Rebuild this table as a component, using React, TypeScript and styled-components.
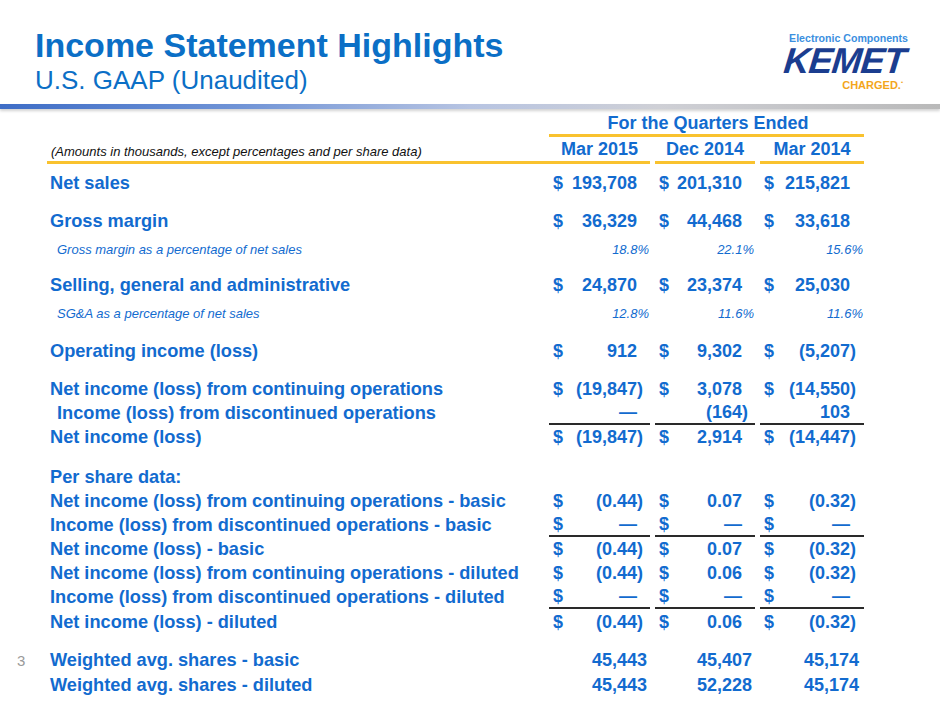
import styled, { createGlobalStyle } from 'styled-components';

const GlobalStyle = createGlobalStyle`
  html, body {
    margin: 0;
    padding: 0;
    background: #fff;
  }
  body {
    font-family: 'Liberation Sans', Arial, sans-serif;
  }
`;

const colors = {
  Title: '#0b6fc6',
  Blue: '#126bcf',
  Yellow: '#f9c22e',
  Rule: '#2a2a2a',
  Grey: '#9a9a9a',
};

const Page = styled.div`
  width: 940px;
  height: 705px;
  overflow: hidden;
  background: #fff;
`;

const Header = styled.header`
  height: 104px;
  display: flex;
  justify-content: space-between;
  align-items: flex-start;
  padding: 0 32px 0 35px;
  box-sizing: border-box;
`;

const TitleBlock = styled.div`
  padding-top: 25px;
  color: ${colors.Title};
`;

const Title = styled.h1`
  margin: 0;
  font-size: 34px;
  line-height: 40px;
  font-weight: 700;
`;

const Subtitle = styled.div`
  font-size: 26px;
  line-height: 30px;
`;

const Logo = styled.div`
  padding-top: 32px;
  display: flex;
  flex-direction: column;
  align-items: flex-end;
  font-weight: 700;
`;

const LogoTag = styled.div`
  font-size: 10.6px;
  line-height: 12px;
  color: #3b8fe0;
`;

const LogoMark = styled.div`
  margin-top: 2px;
  margin-right: 3px;
  font-size: 36px;
  line-height: 30px;
  font-style: italic;
  letter-spacing: -1px;
  color: #1b3d8f;
  transform: skewX(-6deg);
`;

const LogoCharged = styled.div`
  margin-right: 5px;
  font-size: 11px;
  line-height: 12px;
  color: #f3a61c;

  sup {
    font-size: 6px;
  }
`;

const Bar = styled.div`
  height: 5px;
  background: linear-gradient(
    to right,
    #3e6dc6 0%,
    #6f93d6 25%,
    #b7c4e2 50%,
    #cfd0d6 70%,
    #b9b9b9 100%
  );
  box-shadow: 0 2px 3px rgba(0, 0, 0, 0.18);
`;

const Table = styled.div`
  padding-top: 3px;
  color: ${colors.Blue};
`;

const Row = styled.div<{ $gap?: number; $height?: number }>`
  display: grid;
  grid-template-columns: 47px 502px 101px 105px 109px;
  height: ${(p) => p.$height ?? 24}px;
  margin-top: ${(p) => p.$gap ?? 0}px;
`;

const Gutter = styled.div`
  padding-left: 17px;
  font-size: 15px;
  color: ${colors.Grey};
  display: flex;
  align-items: center;
`;

const GroupTitle = styled.div`
  grid-column: 3 / 6;
  border-bottom: 3px solid ${colors.Yellow};
  display: flex;
  justify-content: center;
  align-items: flex-end;
  font-size: 18px;
  font-weight: 700;
  line-height: 21px;
  padding-left: 3px;
`;

const Note = styled.div`
  border-bottom: 3px solid ${colors.Yellow};
  display: flex;
  align-items: flex-end;
  padding: 0 0 2px 4px;
  font-size: 13px;
  font-style: italic;
  color: #111;
`;

const Label = styled.div<{ $indent?: number; $small?: boolean }>`
  display: flex;
  align-items: center;
  padding-left: ${(p) => 3 + (p.$indent ?? 0)}px;
  font-size: ${(p) => (p.$small ? 13 : 18.2)}px;
  font-weight: ${(p) => (p.$small ? 400 : 700)};
  font-style: ${(p) => (p.$small ? 'italic' : 'normal')};
  white-space: nowrap;
`;

const Cell = styled.div<{ $first?: boolean }>`
  padding-left: ${(p) => (p.$first ? 0 : 5)}px;
  display: flex;
`;

const Inner = styled.div<{ $line?: 'yellow' | 'black'; $pad?: number }>`
  flex: 1;
  display: flex;
  align-items: center;
  justify-content: space-between;
  box-sizing: border-box;
  padding: 0 ${(p) => p.$pad ?? 7}px 0 4px;
  border-bottom: ${(p) =>
    p.$line === 'yellow'
      ? `3px solid ${colors.Yellow}`
      : p.$line === 'black'
        ? `2px solid ${colors.Rule}`
        : 'none'};
  font-size: 18px;
  font-weight: 700;
  white-space: nowrap;
`;

const HeadInner = styled(Inner)`
  justify-content: center;
  align-items: flex-end;
  padding: 0 0 1px;
  line-height: 21px;
`;

const CountInner = styled(Inner)`
  justify-content: flex-end;
`;

const PctInner = styled(Inner)`
  justify-content: flex-end;
  padding-right: 1px;
  font-size: 13px;
  font-weight: 400;
  font-style: italic;
`;

const Spacer = styled.span`
  visibility: hidden;
`;

type RowData = {
  label: string;
  values: [string, string, string];
  kind?: 'money' | 'pct' | 'plain' | 'count';
  indent?: number;
  gap?: number;
  underline?: boolean;
  page?: string;
};

const rows: RowData[] = [
  { label: 'Net sales', values: ['193,708', '201,310', '215,821'], gap: 7 },
  { label: 'Gross margin', values: ['36,329', '44,468', '33,618'], gap: 14 },
  {
    label: 'Gross margin as a percentage of net sales',
    values: ['18.8%', '22.1%', '15.6%'],
    kind: 'pct',
    indent: 7,
    gap: 4,
  },
  { label: 'Selling, general and administrative', values: ['24,870', '23,374', '25,030'], gap: 12 },
  {
    label: 'SG&A as a percentage of net sales',
    values: ['12.8%', '11.6%', '11.6%'],
    kind: 'pct',
    indent: 7,
    gap: 4,
  },
  { label: 'Operating income (loss)', values: ['912', '9,302', '(5,207)'], gap: 14 },
  {
    label: 'Net income (loss) from continuing operations',
    values: ['(19,847)', '3,078', '(14,550)'],
    gap: 14,
  },
  {
    label: 'Income (loss) from discontinued operations',
    values: ['—', '(164)', '103'],
    kind: 'plain',
    indent: 7,
    underline: true,
  },
  { label: 'Net income (loss)', values: ['(19,847)', '2,914', '(14,447)'] },
];

const perShare: RowData[] = [
  {
    label: 'Net income (loss) from continuing operations - basic',
    values: ['(0.44)', '0.07', '(0.32)'],
  },
  {
    label: 'Income (loss) from discontinued operations - basic',
    values: ['—', '—', '—'],
    underline: true,
  },
  { label: 'Net income (loss) - basic', values: ['(0.44)', '0.07', '(0.32)'] },
  {
    label: 'Net income (loss) from continuing operations - diluted',
    values: ['(0.44)', '0.06', '(0.32)'],
  },
  {
    label: 'Income (loss) from discontinued operations - diluted',
    values: ['—', '—', '—'],
    underline: true,
  },
  { label: 'Net income (loss) - diluted', values: ['(0.44)', '0.06', '(0.32)'], gap: 1 },
  {
    label: 'Weighted avg. shares - basic',
    values: ['45,443', '45,407', '45,174'],
    kind: 'count',
    gap: 14,
    page: '3',
  },
  {
    label: 'Weighted avg. shares - diluted',
    values: ['45,443', '52,228', '45,174'],
    kind: 'count',
    gap: 1,
  },
];

const Amount = ({ value }: { value: string }) => (
  <span>
    {value}
    {!value.endsWith(')') && <Spacer>)</Spacer>}
  </span>
);

const Value = ({ kind, value, col, underline }: {
  kind: NonNullable<RowData['kind']>;
  value: string;
  col: number;
  underline?: boolean;
}) => {
  if (kind === 'pct') return <PctInner>{value}</PctInner>;
  if (kind === 'count') return <CountInner $pad={col === 2 ? 5 : 3}>{value}</CountInner>;
  return (
    <Inner $line={underline ? 'black' : undefined} $pad={col === 2 ? 8 : 7}>
      <span>{kind === 'money' ? '$' : ''}</span>
      <Amount value={value} />
    </Inner>
  );
};

const DataRow = ({ row }: { row: RowData }) => {
  const kind = row.kind ?? 'money';

  return (
    <Row $gap={row.gap}>
      <Gutter>{row.page}</Gutter>
      <Label $indent={row.indent} $small={kind === 'pct'}>
        {row.label}
      </Label>
      {row.values.map((v, i) => (
        <Cell key={i} $first={i === 0}>
          <Value kind={kind} value={v} col={i} underline={row.underline} />
        </Cell>
      ))}
    </Row>
  );
};

const App = () => {
  return (
    <Page>
      <GlobalStyle />
      <Header>
        <TitleBlock>
          <Title>Income Statement Highlights</Title>
          <Subtitle>U.S. GAAP (Unaudited)</Subtitle>
        </TitleBlock>
        <Logo>
          <LogoTag>Electronic Components</LogoTag>
          <LogoMark>KEMET</LogoMark>
          <LogoCharged>
            CHARGED.<sup>•</sup>
          </LogoCharged>
        </Logo>
      </Header>
      <Bar />
      <Table>
        <Row $height={25}>
          <Gutter />
          <div />
          <GroupTitle>For the Quarters Ended</GroupTitle>
        </Row>
        <Row $height={27}>
          <Gutter />
          <Note>(Amounts in thousands, except percentages and per share data)</Note>
          {['Mar 2015', 'Dec 2014', 'Mar 2014'].map((h, i) => (
            <Cell key={h} $first={i === 0}>
              <HeadInner $line="yellow">{h}</HeadInner>
            </Cell>
          ))}
        </Row>
        {rows.map((r) => (
          <DataRow key={r.label} row={r} />
        ))}
        <Row $gap={16}>
          <Gutter />
          <Label>Per share data:</Label>
        </Row>
        {perShare.map((r) => (
          <DataRow key={r.label} row={r} />
        ))}
      </Table>
    </Page>
  );
};

export default App;
